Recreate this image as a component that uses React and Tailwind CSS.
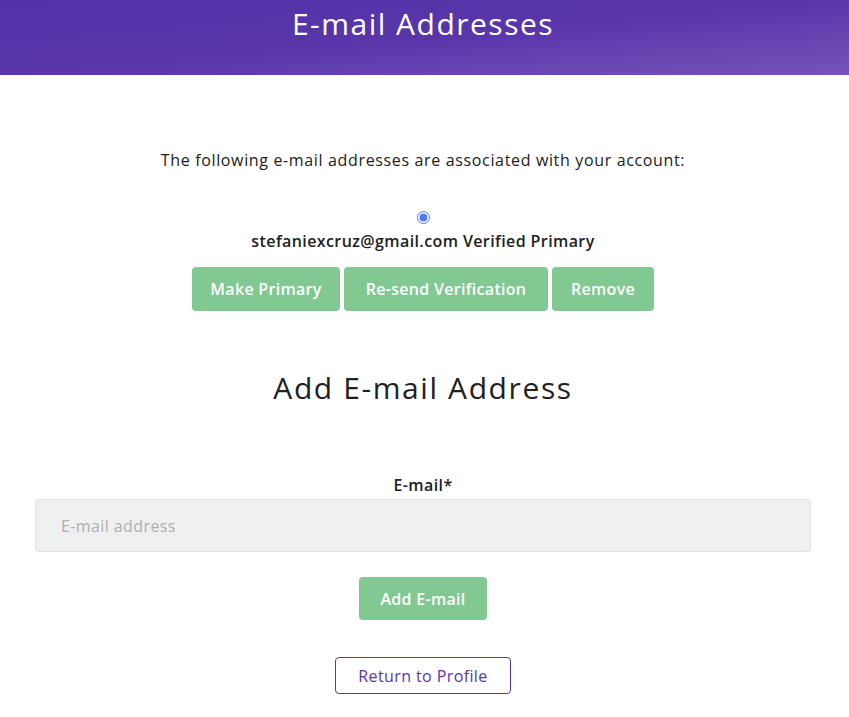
export default function App() {
  return (
    <div className="min-h-screen bg-white text-[#212121]" style={{ fontFamily: '"Open Sans", "Noto Sans", sans-serif' }}>
      {/* Header */}
      <div className="h-[75px] bg-gradient-to-br from-[#5232a7] via-[#5836aa] to-[#7653ba]">
        <h1 className="w-[846px] text-center text-[30px] leading-[48px] font-medium tracking-[1.5px] text-white">
          E-mail Addresses
        </h1>
      </div>

      <div className="w-[846px]">
        <div className="mx-auto w-[776px] pt-[73px] text-center">
          <p className="text-[16px] leading-6 tracking-[0.65px]">
            The following e-mail addresses are associated with your account:
          </p>

          <div className="mt-[39px] flex flex-col items-center">
            <input type="radio" defaultChecked className="h-[13px] w-[13px] accent-[#4f7cf5]" />
            <p className="mt-[5px] text-[16px] leading-6 font-semibold tracking-[0.4px]">
              stefaniexcruz@gmail.com Verified Primary
            </p>
            <div className="mt-[14px] flex justify-center gap-1">
              <button className="h-[44px] w-[148px] rounded bg-[#82c893] text-[16px] font-semibold tracking-[0.3px] text-white">
                Make Primary
              </button>
              <button className="h-[44px] w-[204px] rounded bg-[#82c893] text-[16px] font-semibold tracking-[0.3px] text-white">
                Re-send Verification
              </button>
              <button className="h-[44px] w-[102px] rounded bg-[#82c893] text-[16px] font-semibold tracking-[0.3px] text-white">
                Remove
              </button>
            </div>
          </div>

          <h2 className="mt-[53px] text-[30px] leading-[48px] font-medium tracking-[1.6px]">Add E-mail Address</h2>

          <form className="mt-[61px]">
            <label className="block text-[16px] leading-6 font-semibold tracking-[0.4px]">E-mail*</label>
            <input
              type="email"
              placeholder="E-mail address"
              className="mt-[2px] block h-[53px] w-full rounded border border-[#e0e2e5] bg-[#eff0f2] px-[25px] text-[16px] tracking-[0.4px] placeholder:text-[#aeaeae]"
            />
            <button
              type="button"
              className="mt-[25px] h-[43px] w-[128px] rounded bg-[#82c893] text-[16px] font-semibold tracking-[0.3px] text-white"
            >
              Add E-mail
            </button>
          </form>

          <div className="mt-[37px] pb-6">
            <button className="h-[37px] w-[176px] rounded border border-[#5a35b3] text-[16px] tracking-[0.4px] text-[#5a35b3]">
              Return to Profile
            </button>
          </div>
        </div>
      </div>
    </div>
  );
}
